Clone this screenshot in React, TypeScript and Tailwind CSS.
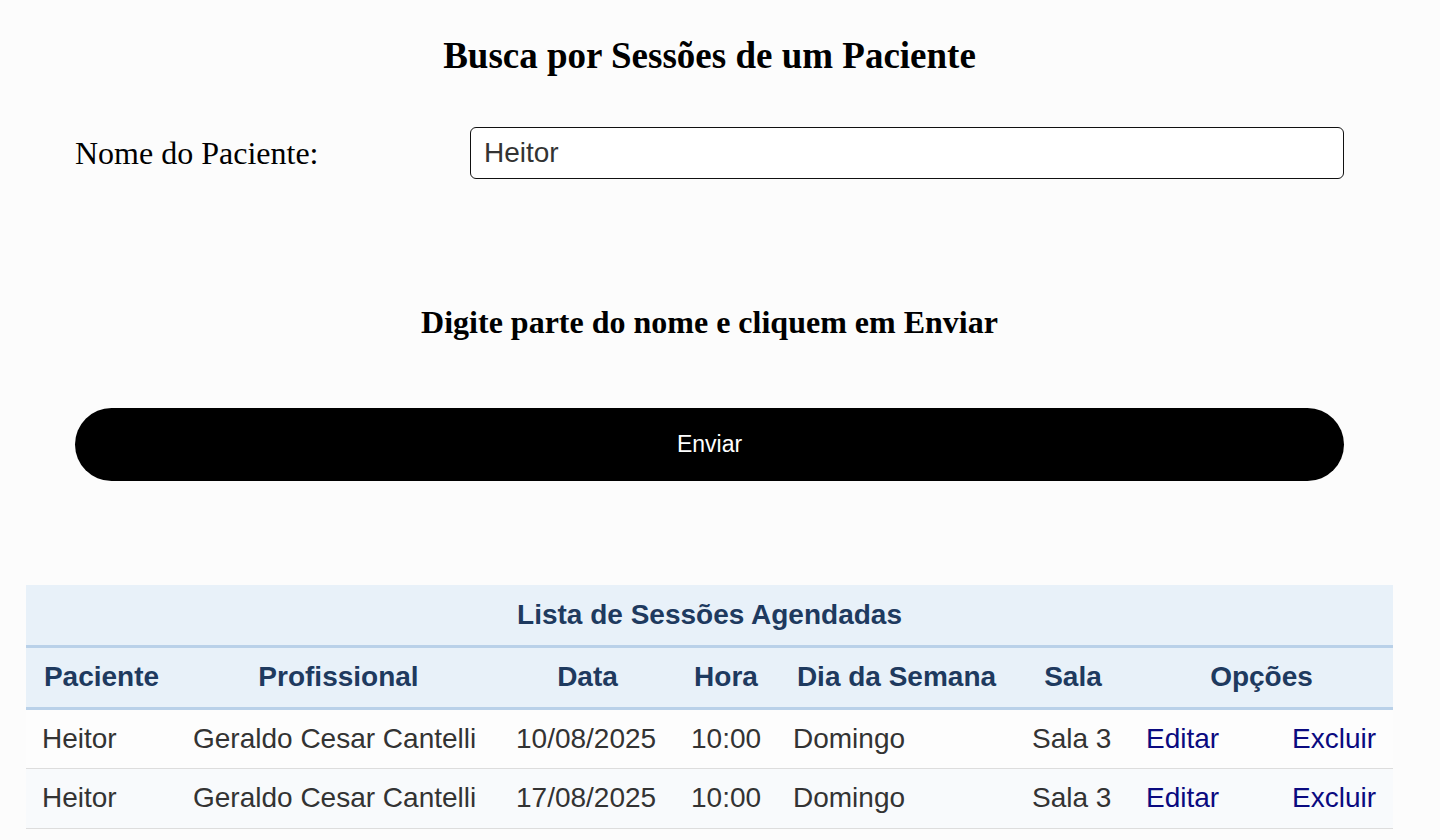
import React from "react";

const serif = { fontFamily: '"Liberation Serif", "Times New Roman", serif' };

const cols = [151, 323, 175, 102, 239, 114, 146, 117];

const rows = [
  { p: "Heitor", prof: "Geraldo Cesar Cantelli", data: "10/08/2025", hora: "10:00", dia: "Domingo", sala: "Sala 3" },
  { p: "Heitor", prof: "Geraldo Cesar Cantelli", data: "17/08/2025", hora: "10:00", dia: "Domingo", sala: "Sala 3" },
];

export default function App() {
  return (
    <div className="min-h-[840px] w-full bg-[#fcfcfc] font-['Liberation_Sans',Arial,sans-serif]">
      <div className="w-[1419px]">
        <h1
          style={serif}
          className="pt-[35px] text-center text-[37px] font-bold leading-[42px] text-black"
        >
          Busca por Sessões de um Paciente
        </h1>

        <div className="mx-[75px] mt-[50px]">
          <div className="flex items-center">
            <label style={serif} className="w-[395px] shrink-0 text-[32px] leading-[37px] text-black">
              Nome do Paciente:
            </label>
            <input
              type="text"
              defaultValue="Heitor"
              className="h-[52px] flex-1 rounded-[6px] border-[1.5px] border-[#111] bg-white px-[13px] text-[28px] text-[#333] outline-none"
            />
          </div>

          <h2
            style={serif}
            className="mt-[125px] text-center text-[32px] font-bold leading-[37px] text-black"
          >
            Digite parte do nome e cliquem em Enviar
          </h2>

          <button className="mt-[67px] flex h-[73px] w-full items-center justify-center rounded-full bg-black text-[23px] text-white">
            Enviar
          </button>
        </div>

        <table className="ml-[26px] mt-[104px] w-[1367px] table-fixed border-collapse">
          <colgroup>
            {cols.map((w, i) => (
              <col key={i} style={{ width: w }} />
            ))}
          </colgroup>
          <thead>
            <tr className="bg-[#e8f1f9]">
              <th
                colSpan={8}
                className="h-[61px] border-b-[3px] border-[#b9d1e9] text-center text-[28px] font-bold text-[#1e3a5f]"
              >
                Lista de Sessões Agendadas
              </th>
            </tr>
            <tr className="bg-[#e8f1f9] text-[28px] font-bold text-[#1e3a5f]">
              <th className="h-[62px] border-b-[3px] border-[#b9d1e9] px-[16px] text-center whitespace-nowrap">Paciente</th>
              <th className="border-b-[3px] border-[#b9d1e9] px-[16px] text-center whitespace-nowrap">Profissional</th>
              <th className="border-b-[3px] border-[#b9d1e9] px-[16px] text-center whitespace-nowrap">Data</th>
              <th className="border-b-[3px] border-[#b9d1e9] px-[16px] text-center whitespace-nowrap">Hora</th>
              <th className="border-b-[3px] border-[#b9d1e9] px-[16px] text-center whitespace-nowrap">Dia da Semana</th>
              <th className="border-b-[3px] border-[#b9d1e9] px-[16px] text-center whitespace-nowrap">Sala</th>
              <th colSpan={2} className="border-b-[3px] border-[#b9d1e9] px-[16px] text-center whitespace-nowrap">Opções</th>
            </tr>
          </thead>
          <tbody>
            {rows.map((r, i) => (
              <tr
                key={i}
                className={(i % 2 === 1 ? "bg-[#f8fafc]" : "bg-[#fdfdfd]") + " text-[28px] text-[#333]"}
              >
                <td className="h-[60px] border-b border-[#dddddd] px-[16px] text-left whitespace-nowrap">{r.p}</td>
                <td className="border-b border-[#dddddd] px-[16px] text-left whitespace-nowrap">{r.prof}</td>
                <td className="border-b border-[#dddddd] px-[16px] text-left whitespace-nowrap">{r.data}</td>
                <td className="border-b border-[#dddddd] px-[16px] text-left whitespace-nowrap">{r.hora}</td>
                <td className="border-b border-[#dddddd] px-[16px] text-left whitespace-nowrap">{r.dia}</td>
                <td className="border-b border-[#dddddd] px-[16px] text-left whitespace-nowrap">{r.sala}</td>
                <td className="border-b border-[#dddddd] px-[16px] text-left whitespace-nowrap">
                  <a href="#" className="text-[#0a0a80]">Editar</a>
                </td>
                <td className="border-b border-[#dddddd] px-[16px] text-left whitespace-nowrap">
                  <a href="#" className="text-[#0a0a80]">Excluir</a>
                </td>
              </tr>
            ))}
          </tbody>
        </table>
      </div>
    </div>
  );
}
